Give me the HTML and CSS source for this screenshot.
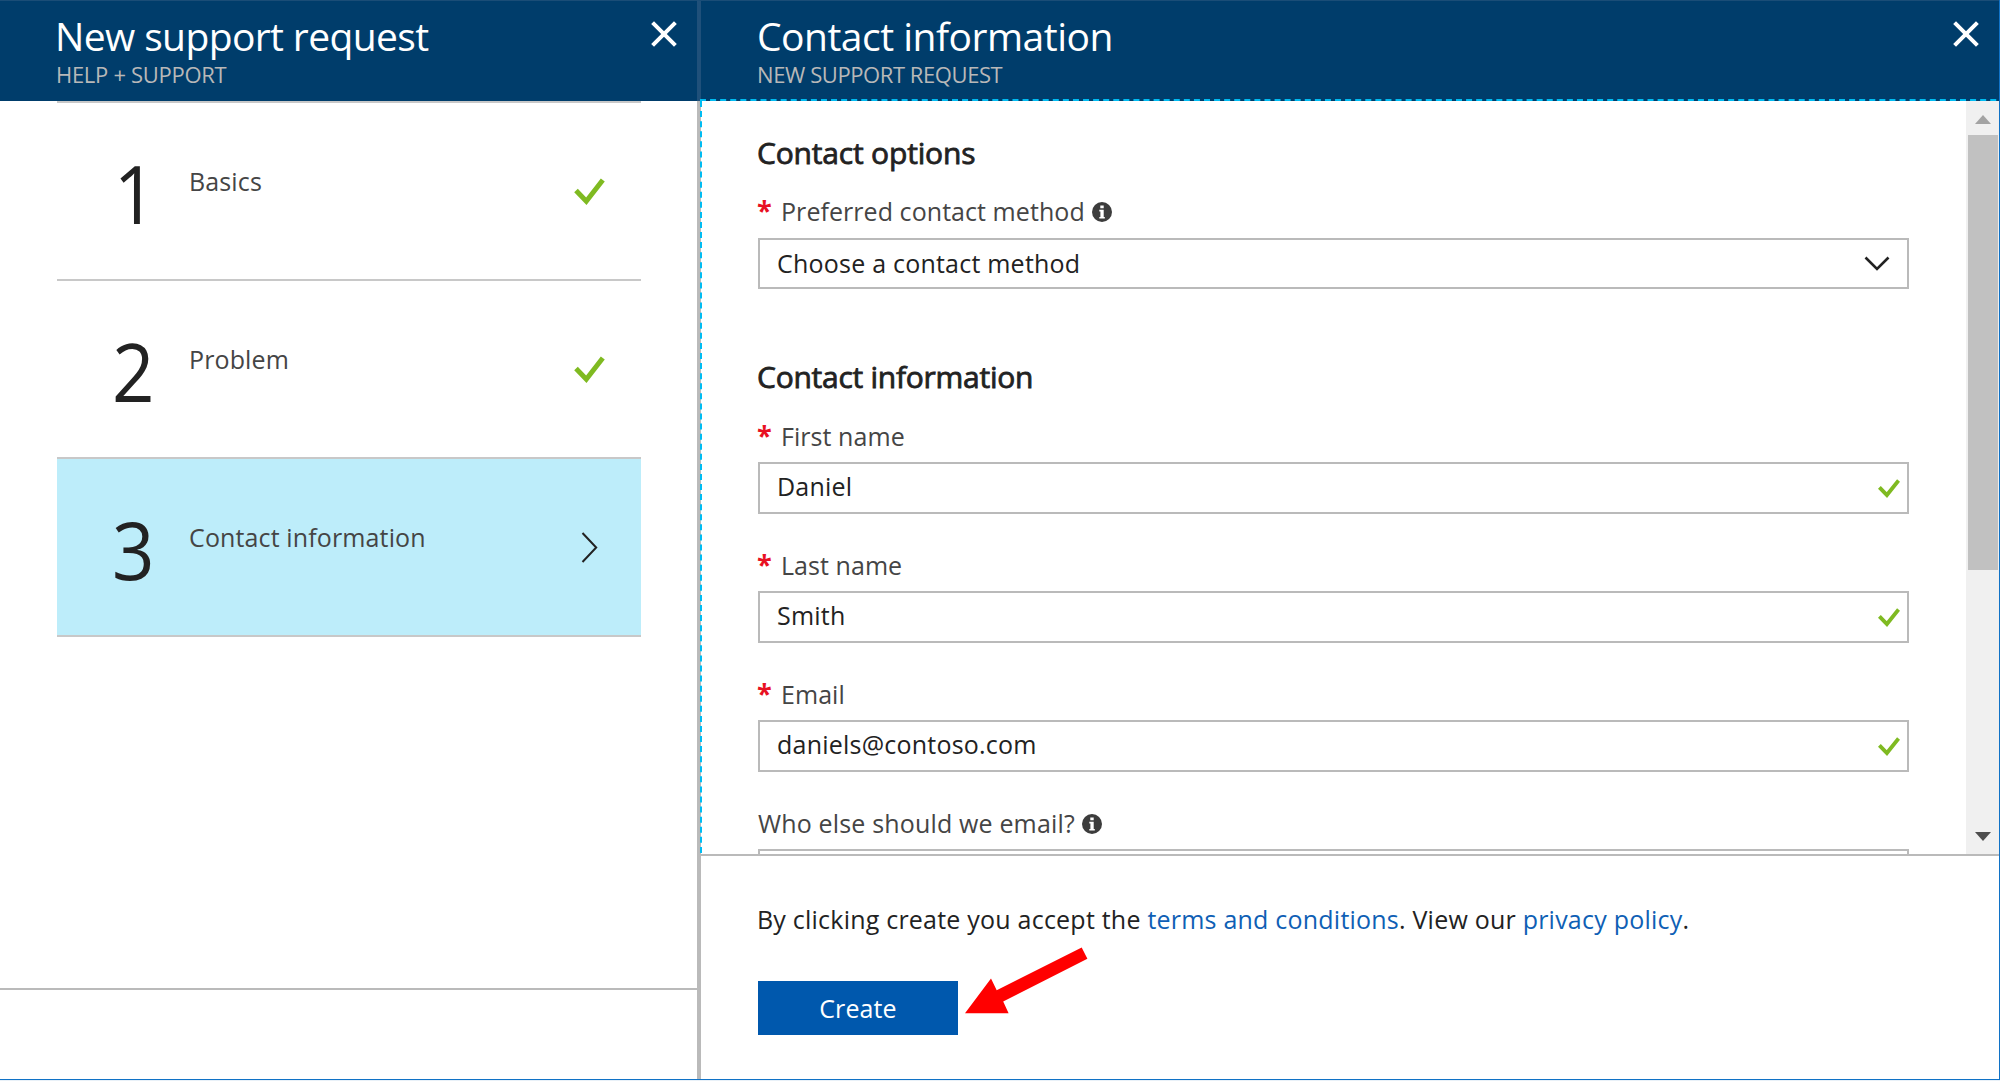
FILE: index.html
```
<!DOCTYPE html>
<html lang="en">
<head>
<meta charset="utf-8">
<title>New support request</title>
<link rel="stylesheet" href="styles.css">
</head>
<body>
<svg class="defs" width="0" height="0" aria-hidden="true">
  <symbol id="close" viewBox="0 0 26 26"><path d="M1.6 1.6L24.4 24.4M24.4 1.6L1.6 24.4" fill="none" stroke="#fff" stroke-width="4"/></symbol>
  <symbol id="check" viewBox="0 0 31 27"><path d="M2 12.5L12.3 23.2L28.8 2" fill="none" stroke="#7fba21" stroke-width="5"/></symbol>
  <symbol id="check-small" viewBox="0 0 22 19"><path d="M1.4 8.3L8.9 16L20.6 1.5" fill="none" stroke="#7fba21" stroke-width="3.9"/></symbol>
  <symbol id="info" viewBox="0 0 20 20"><circle cx="10" cy="10" r="10" fill="#3c3c3c"/><path d="M8.3 3.6h3.4v2.7H8.3zM7.3 7.8h4.4v7.2h1.1v1.6H7.3v-1.6h1.1V9.4H7.3z" fill="#fff"/></symbol>
</svg>
<div class="portal">
  <section class="blade steps-blade">
    <header class="blade-header">
      <div>
        <h1>New support request</h1>
        <p>HELP + SUPPORT</p>
      </div>
      <svg class="close"><use href="#close"/></svg>
    </header>
    <ol class="steps">
      <li class="step"><span class="num one">1</span><span class="name">Basics</span><svg class="check"><use href="#check"/></svg></li>
      <li class="step"><span class="num">2</span><span class="name">Problem</span><svg class="check"><use href="#check"/></svg></li>
      <li class="step active"><span class="num">3</span><span class="name">Contact information</span><svg class="next" viewBox="0 0 17 31"><path d="M1.5 1L15.2 15.5L1.5 30" fill="none" stroke="#222" stroke-width="2"/></svg></li>
    </ol>
    <div class="steps-footer"></div>
  </section>
  <section class="blade form-blade">
    <header class="blade-header">
      <div>
        <h1>Contact information</h1>
        <p>NEW SUPPORT REQUEST</p>
      </div>
      <svg class="close"><use href="#close"/></svg>
    </header>
    <div class="form-area">
      <svg class="focus-ring" width="1299" height="757"><path d="M0 1H1299" stroke-dasharray="6 4.08"/><path d="M1 2V757" stroke-dasharray="6 4.08"/></svg>
      <form class="form">
        <h2>Contact options</h2>
        <div class="field">
          <div class="label"><span class="req">*</span>Preferred contact method<svg class="info"><use href="#info"/></svg></div>
          <div class="box select">Choose a contact method<svg class="down" viewBox="0 0 26 15"><path d="M1.5 1.5L13 13L24.5 1.5" fill="none" stroke="#222" stroke-width="2.6"/></svg></div>
        </div>
        <h2 class="second">Contact information</h2>
        <div class="field">
          <div class="label"><span class="req">*</span>First name</div>
          <div class="box">Daniel<svg class="ok"><use href="#check-small"/></svg></div>
        </div>
        <div class="field">
          <div class="label"><span class="req">*</span>Last name</div>
          <div class="box">Smith<svg class="ok"><use href="#check-small"/></svg></div>
        </div>
        <div class="field">
          <div class="label"><span class="req">*</span>Email</div>
          <div class="box">daniels@contoso.com<svg class="ok"><use href="#check-small"/></svg></div>
        </div>
        <div class="field">
          <div class="label optional">Who else should we email?<svg class="info"><use href="#info"/></svg></div>
          <div class="box"></div>
        </div>
      </form>
      <div class="scrollbar">
        <svg width="16" height="9"><path d="M0 9L8 0L16 9z" fill="#a3a3a3"/></svg>
        <div class="thumb"></div>
        <svg class="arrow-down" width="16" height="9"><path d="M0 0L8 9L16 0z" fill="#4d4d4d"/></svg>
      </div>
    </div>
    <footer class="actions">
      <p>By clicking create you accept the <a>terms and conditions</a>. View our <a>privacy policy</a>.</p>
      <div class="button">Create</div>
      <svg class="pointer" width="123" height="67"><path d="M0 66.3L26 31.5L31.7 43.3L116.7 0.4L122.4 11.8L38.2 54.6L43.6 66.3z" fill="#f00"/></svg>
    </footer>
  </section>
</div>
</body>
</html>
```
FILE: styles.css
```
* { box-sizing: border-box; margin: 0; padding: 0; }
body {
  width: 2000px;
  height: 1081px;
  overflow: hidden;
  background: #e9f1f8;
  color: #222;
  font: 25px/34px "Open Sans", "Noto Sans", sans-serif;
  letter-spacing: 0.13px;
}
svg { display: block; flex: none; }
.defs { position: absolute; }

.portal {
  display: flex;
  width: 2000px;
  height: 1080px;
  background: #fff;
  border-right: 1px solid #1072c6;
  border-bottom: 1px solid #1072c6;
}
.blade { display: flex; flex-direction: column; }
.steps-blade { width: 697px; }
.form-blade { flex: 1; position: relative; border-left: 4px solid #bababa; }

.blade-header {
  display: flex;
  justify-content: space-between;
  height: 101px;
  padding: 12px 20px 0 57px;
  background: #003d6b;
  border-top: 1px solid #1a4d77;
  color: #fff;
}
.blade-header > div { margin-left: -2px; }
.form-blade .blade-header {
  margin-left: -4px;
  padding-left: 57px;
  border-left: 4px solid #1f507a;
}
h1 { font-size: 39px; font-weight: 400; line-height: 46px; letter-spacing: -0.62px; }
.form-blade h1 { letter-spacing: -0.5px; margin-left: 1px; }
.blade-header p { font-size: 22px; line-height: 30px; letter-spacing: -0.3px; color: #b8b8b8; margin-left: 1px; }
.form-blade .blade-header p { letter-spacing: -0.42px; }
.close { width: 26px; height: 26px; margin-top: 8px; }

.steps { flex: 1; margin: 0 56px 0 57px; list-style: none; }
.step {
  display: flex;
  align-items: flex-start;
  height: 178px;
  padding-left: 55px;
  padding-right: 36px;
  border-top: 2px solid #c8c8c8;
}
.step.active { height: 180px; background: #bdedfa; border-bottom: 2px solid #c8c8c8; }
.num { width: 77px; margin-top: 50px; font-size: 80px; line-height: 80px; transform: scaleX(0.93); transform-origin: left; }
.num.one { padding-left: 2px; }
.name { flex: 1; margin-top: 61px; color: #454545; }
.check { width: 31px; height: 27px; margin-top: 75px; }
.next { width: 17px; height: 31px; margin: 73px 7px 0 0; }
.steps-footer { height: 91px; border-top: 2px solid #bababa; }

.form-area { display: flex; position: relative; height: 753px; }
.focus-ring { position: absolute; left: -1px; top: -2px; z-index: 1; fill: none; stroke: #00bcf2; stroke-width: 2; }
.form { flex: 1; height: 753px; overflow: hidden; padding: 34px 57px 0 57px; }
h2 {
  height: 36px;
  margin: 0 0 24px -1px;
  font-size: 30px;
  line-height: 36px;
  font-weight: 400;
  letter-spacing: -0.18px;
  -webkit-text-stroke: 0.8px #222;
}
h2.second { margin-top: 70px; margin-bottom: 25px; letter-spacing: -0.26px; }
.form h2.second { margin-top: 69.5px; }
.field + .field { margin-top: 35px; }
.label { display: flex; height: 33px; margin-bottom: 9.5px; line-height: 33px; color: #454545; letter-spacing: 0.06px; }
.label.optional { letter-spacing: 0.16px; }
.req { width: 24px; margin-top: -2px; margin-left: -1px; color: #e81123; font-size: 27px; font-weight: 700; }
.info { width: 20px; height: 20px; margin: 7px 0 0 7px; }
.box {
  display: flex;
  justify-content: space-between;
  align-items: center;
  height: 51.5px;
  padding: 0 7px 4px 17px;
  border: 2px solid #bababa;
  letter-spacing: 0.22px;
}
.box.select { padding: 0 17px 0 17px; }
.down { width: 26px; height: 15px; }
.ok { width: 22px; height: 19px; margin-top: 5px; }

.scrollbar { display: flex; flex-direction: column; align-items: center; width: 33px; padding: 14px 0 13px; background: #f0f0f0; }
.thumb { width: 30px; height: 435px; margin-top: 11px; background: #c1c1c1; }
.arrow-down { margin-top: auto; }

.actions { flex: 1; padding: 46px 57px 0; border-top: 2px solid #bababa; letter-spacing: 0.22px; }
.actions p { margin-left: -1px; }
a { color: #0f5fb5; }
.button { width: 200px; height: 54px; margin-top: 45px; background: #0058ad; color: #fff; line-height: 54px; text-align: center; letter-spacing: 0.1px; }
.pointer { position: absolute; left: 264px; top: 946.5px; }
```
